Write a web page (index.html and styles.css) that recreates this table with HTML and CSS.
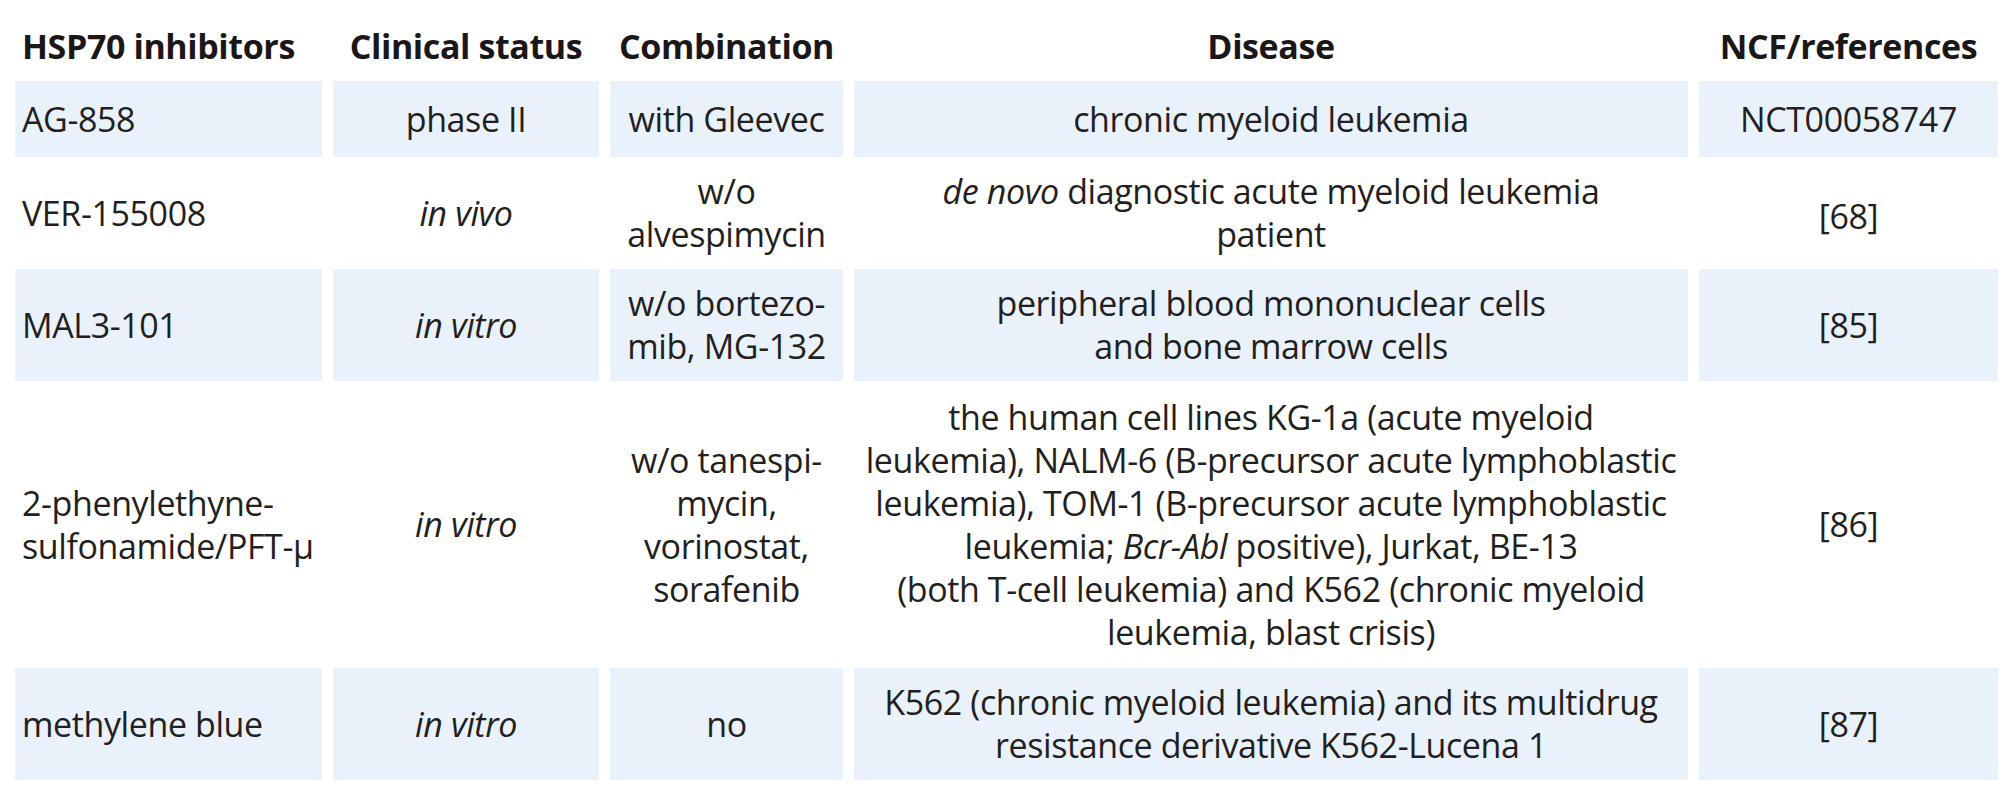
FILE: index.html
```html
<!DOCTYPE html>
<html lang="en">
<head>
<meta charset="utf-8">
<title>HSP70 inhibitors</title>
<link rel="stylesheet" href="styles.css">
</head>
<body>
<div class="table">
  <div class="cell head first">HSP70 inhibitors</div>
  <div class="cell head">Clinical status</div>
  <div class="cell head">Combination</div>
  <div class="cell head">Disease</div>
  <div class="cell head">NCF/references</div>

  <div class="cell shade first">AG-858</div>
  <div class="cell shade">phase II</div>
  <div class="cell shade">with Gleevec</div>
  <div class="cell shade">chronic myeloid leukemia</div>
  <div class="cell shade">NCT00058747</div>

  <div class="cell first">VER-155008</div>
  <div class="cell"><span class="it">in vivo</span></div>
  <div class="cell">w/o<br>alvespimycin</div>
  <div class="cell"><span><span class="it">de novo</span> diagnostic acute myeloid leukemia<br>patient</span></div>
  <div class="cell ref">[68]</div>

  <div class="cell shade first">MAL3-101</div>
  <div class="cell shade"><span class="it">in vitro</span></div>
  <div class="cell shade">w/o bortezo-<br>mib, MG-132</div>
  <div class="cell shade">peripheral blood mononuclear cells<br>and bone marrow cells</div>
  <div class="cell shade">[85]</div>

  <div class="cell first">2-phenylethyne-<br>sulfonamide/PFT-µ</div>
  <div class="cell"><span class="it">in vitro</span></div>
  <div class="cell">w/o tanespi-<br>mycin,<br>vorinostat,<br>sorafenib</div>
  <div class="cell"><span>the human cell lines KG-1a (acute myeloid<br>leukemia), NALM-6 (B-precursor acute lymphoblastic<br>leukemia), TOM-1 (B-precursor acute lymphoblastic<br>leukemia; <span class="it">Bcr-Abl</span> positive), Jurkat, BE-13<br>(both T-cell leukemia) and K562 (chronic myeloid<br>leukemia, blast crisis)</span></div>
  <div class="cell">[86]</div>

  <div class="cell shade first">methylene blue</div>
  <div class="cell shade"><span class="it">in vitro</span></div>
  <div class="cell shade">no</div>
  <div class="cell shade">K562 (chronic myeloid leukemia) and its multidrug<br>resistance derivative K562-Lucena 1</div>
  <div class="cell shade">[87]</div>
</div>
</body>
</html>
```

FILE: styles.css
```css
html, body {
  margin: 0;
  padding: 0;
  background: #ffffff;
}

body {
  font-family: "Open Sans", "Noto Sans", sans-serif;
  font-size: 34px;
  letter-spacing: -0.4px;
  line-height: 43px;
  color: #231f20;
}

.table {
  display: grid;
  grid-template-columns: 307px 266px 233px 834px 299px;
  grid-template-rows: 81px 76px 112px 112px 287px 112px;
  column-gap: 11px;
  row-gap: 0;
  padding-left: 15px;
  width: max-content;
}

.cell {
  display: flex;
  align-items: center;
  justify-content: center;
  text-align: center;
  white-space: nowrap;
  box-sizing: border-box;
}

.cell.first {
  justify-content: flex-start;
  text-align: left;
  padding-left: 7px;
}

.head {
  font-weight: 700;
  color: #1b1718;
  padding-top: 12px;
}

.shade {
  background: #e9f1fa;
}

.it {
  font-style: italic;
}

.ref {
  padding-top: 6px;
}
```
